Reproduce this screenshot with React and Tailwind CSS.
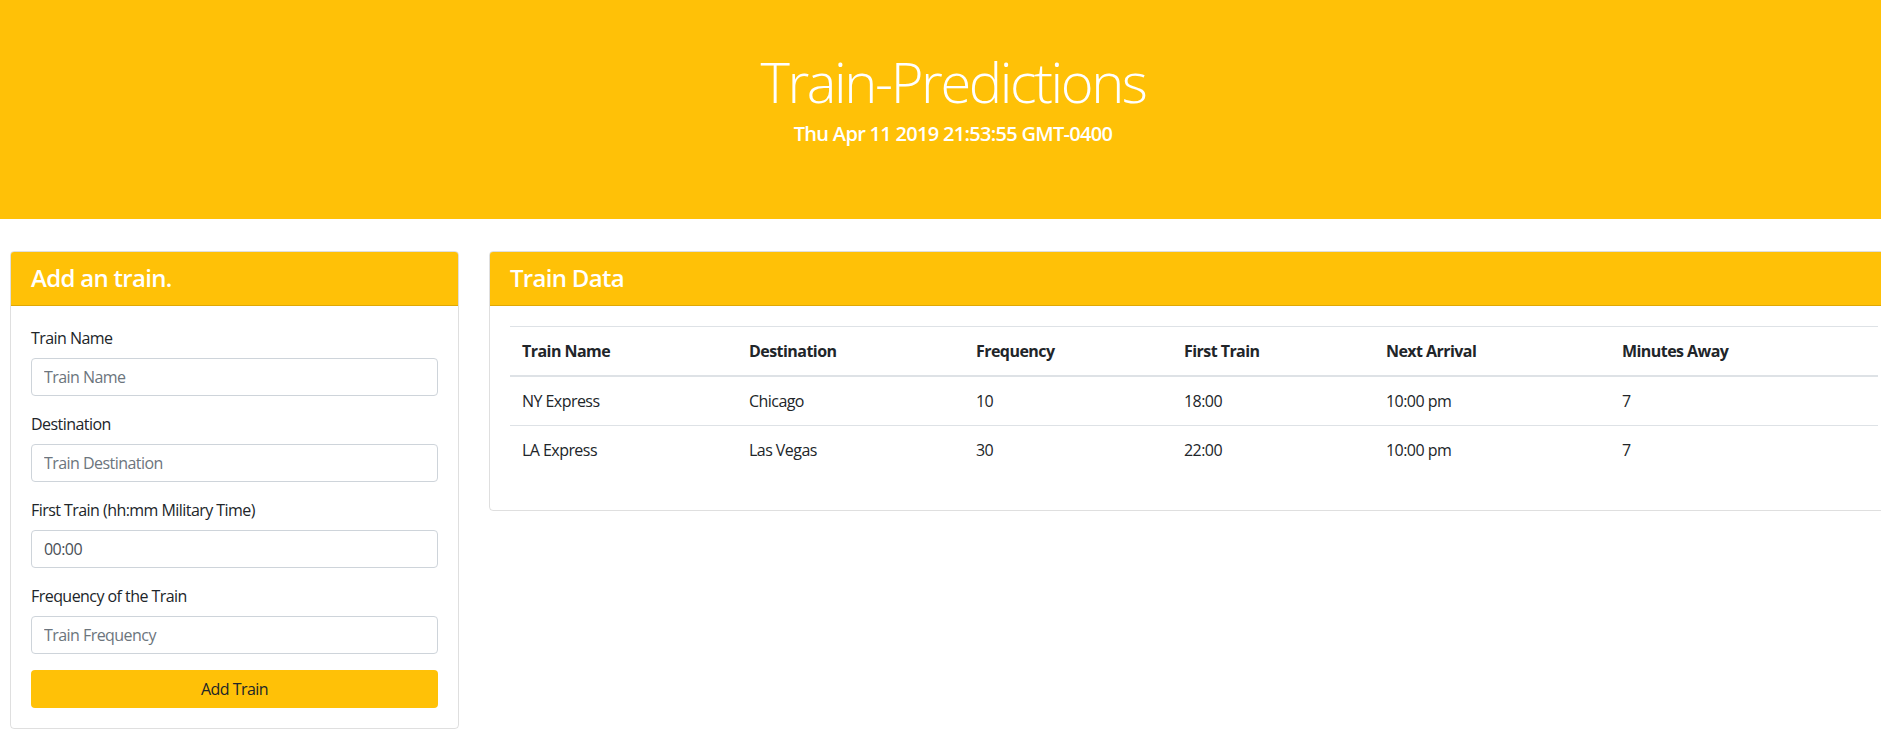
import React from 'react';

const rows = [
  ['NY Express', 'Chicago', '10', '18:00', '10:00 pm', '7'],
  ['LA Express', 'Las Vegas', '30', '22:00', '10:00 pm', '7'],
];

const heads = ['Train Name', 'Destination', 'Frequency', 'First Train', 'Next Arrival', 'Minutes Away'];
const colWidths = ['w-[227px]', 'w-[227px]', 'w-[208px]', 'w-[202px]', 'w-[236px]', 'w-[268px]'];

const Field = ({ label, placeholder, value }) => (
  <div className="mb-4">
    <label className="block mb-2 leading-6 text-[16px] text-[#212529]">{label}</label>
    <input
      type="text"
      placeholder={placeholder}
      defaultValue={value}
      className="block w-full h-[38px] px-3 py-[6px] text-[16px] leading-6 text-[#495057] placeholder:text-[#6c757d] bg-white border border-[#ced4da] rounded-[4px] outline-none"
    />
  </div>
);

const CardHeader = ({ children }) => (
  <div className="bg-[#ffc107] px-5 py-3 border-b border-[rgba(0,0,0,0.125)] rounded-t-[3px]">
    <h4 className="text-[24px] leading-[1.2] font-semibold tracking-[-0.7px] text-white">{children}</h4>
  </div>
);

export default function App() {
  return (
    <div className="w-full overflow-hidden bg-white font-['Open_Sans','Noto_Sans',sans-serif] tracking-[-0.55px] text-[#212529]">
      <div className="w-[1906px]">
        <header className="bg-[#ffc107] h-[219px] pt-[48px] text-center text-white">
          <h1 className="text-[56px] leading-[1.2] font-light tracking-[-2.4px]">Train-Predictions</h1>
          <h5 className="text-[20px] leading-6 font-semibold tracking-[-0.7px] mt-[7px]">Thu Apr 11 2019 21:53:55 GMT-0400</h5>
        </header>

        <div className="flex items-start gap-[30px] pl-[10px] mt-[32px]">
          {/* form card */}
          <div className="w-[449px] shrink-0 border border-[rgba(0,0,0,0.125)] rounded-[4px]">
            <CardHeader>Add an train.</CardHeader>
            <div className="p-5">
              <Field label="Train Name" placeholder="Train Name" />
              <Field label="Destination" placeholder="Train Destination" />
              <Field label="First Train (hh:mm Military Time)" value="00:00" />
              <Field label="Frequency of the Train" placeholder="Train Frequency" />
              <button className="block w-full h-[38px] bg-[#ffc107] text-[#212529] text-[16px] leading-6 rounded-[4px]">
                Add Train
              </button>
            </div>
          </div>

          {/* table card */}
          <div className="w-[1410px] shrink-0 border border-[rgba(0,0,0,0.125)] rounded-[4px]">
            <CardHeader>Train Data</CardHeader>
            <div className="p-5">
              <table className="w-full mb-4 border-collapse text-left text-[16px] leading-6">
                <thead>
                  <tr>
                    {heads.map((h, i) => (
                      <th key={h} className={`${colWidths[i]} p-3 font-bold border-t border-b-2 border-[#dee2e6]`}>{h}</th>
                    ))}
                  </tr>
                </thead>
                <tbody>
                  {rows.map((r) => (
                    <tr key={r[0]}>
                      {r.map((c, i) => (
                        <td key={i} className="p-3 border-t border-[#dee2e6]">{c}</td>
                      ))}
                    </tr>
                  ))}
                </tbody>
              </table>
            </div>
          </div>
        </div>
      </div>
    </div>
  );
}
